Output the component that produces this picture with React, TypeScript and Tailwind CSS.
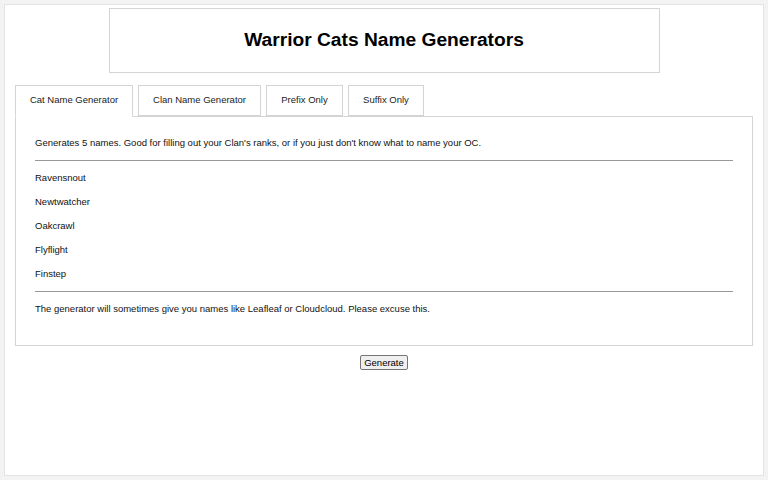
import React from "react";

const tabs = ["Cat Name Generator", "Clan Name Generator", "Prefix Only", "Suffix Only"];
const widths = [118, 123, 77, 76];
const names = ["Ravensnout", "Newtwatcher", "Oakcrawl", "Flyflight", "Finstep"];

export default function App() {
  const [active, setActive] = React.useState(0);

  return (
    <div className="min-h-screen bg-[#f3f3f3] p-[4px] font-['Liberation_Sans',Arial,sans-serif] text-[#111]">
      <div className="h-[472px] bg-white border border-[#e3e3e3] pt-[3px] px-[10px]">
        {/* Title box */}
        <div className="mx-auto w-[551px] h-[65px] border border-[#d4d4d4] flex items-center justify-center">
          <h1 className="text-[19.2px] font-bold text-black">Warrior Cats Name Generators</h1>
        </div>

        {/* Tabs */}
        <div className="mt-[12px] flex gap-[5px] relative z-10">
          {tabs.map((t, i) => (
            <button
              key={t}
              onClick={() => setActive(i)}
              className={
                "h-[31px] whitespace-nowrap text-[9.5px] text-[#222] border border-[#d4d4d4] bg-white " +
                (i === active ? "border-b-white mb-[-1px] h-[32px] pb-[1px]" : "")
              }
              style={{ width: widths[i] }}
            >
              {t}
            </button>
          ))}
        </div>

        {/* Panel */}
        <div className="border border-[#d4d4d4] h-[230px] px-[19px] pt-[20px] text-[9.5px] text-[#111]">
          <p className="leading-[12px]">
            Generates 5 names. Good for filling out your Clan's ranks, or if you just don't know what to name your OC.
          </p>
          <hr className="mt-[11px] border-t border-[#999]" />
          <div className="mt-[11px] flex flex-col gap-[12px]">
            {names.map((n) => (
              <div key={n} className="leading-[12px]">{n}</div>
            ))}
          </div>
          <hr className="mt-[11px] border-t border-[#999]" />
          <p className="mt-[11px] leading-[12px]">
            The generator will sometimes give you names like Leafleaf or Cloudcloud. Please excuse this.
          </p>
        </div>

        <div className="mt-[9px] flex justify-center">
          <button className="h-[15px] px-[3px] text-[9.5px] leading-[13px] text-black bg-[#efefef] border border-[#767676] rounded-[2px]">
            Generate
          </button>
        </div>
      </div>
    </div>
  );
}
